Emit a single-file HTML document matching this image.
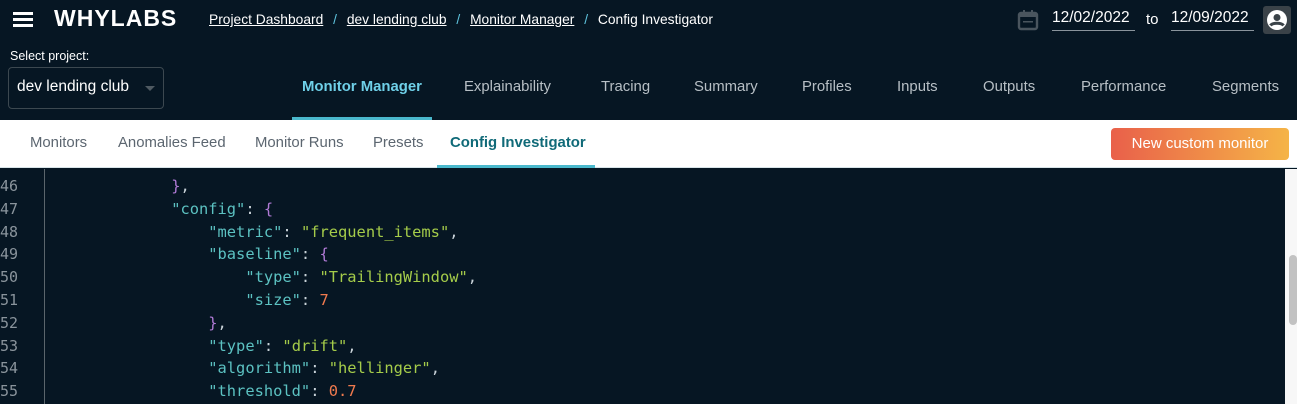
<!DOCTYPE html>
<html><head><style>
*{margin:0;padding:0;box-sizing:border-box}
body{width:1297px;height:404px;overflow:hidden;background:#061623;font-family:"Liberation Sans",sans-serif;position:relative}
.a{position:absolute;white-space:nowrap}
.top{color:#fff;font-size:13.8px}
.top u{text-decoration:underline}
.nav{color:#b7bfc5;font-size:14.9px;top:79px}
.sub{color:#5c6670;font-size:14.9px;top:135px}
.code{font-family:"DejaVu Sans Mono","Liberation Mono",monospace;font-size:15.4px;color:#5cc2c2;white-space:pre}
.ln{font-family:"DejaVu Sans Mono",monospace;font-size:15px;color:#8a949c;left:12px}
.s{color:#a5cc4a}.n{color:#f07a4e}.b{color:#b07ad6}.p{color:#c9d3d9}
</style></head><body>
<div class="a" style="left:13px;top:12px;width:20px;height:3px;background:#fff;box-shadow:0 6px 0 #fff,0 12px 0 #fff"></div>
<div class="a" style="left:54px;top:5px;color:#fff;font-size:23px;font-weight:bold;letter-spacing:1px">WHYLABS</div>
<div class="a top" style="left:209px;top:12px"><u>Project Dashboard</u> <span style="color:#5ec3dd;margin:0 6px">/</span> <u>dev lending club</u> <span style="color:#5ec3dd;margin:0 6px">/</span> <u>Monitor Manager</u> <span style="color:#5ec3dd;margin:0 6px">/</span> Config Investigator</div>
<svg class="a" style="left:1017px;top:9px" width="22" height="22" viewBox="0 0 22 22"><rect x="2" y="4" width="18" height="16" rx="2" fill="none" stroke="#4a555e" stroke-width="2.4"/><rect x="2" y="4" width="18" height="4" fill="#4a555e"/><rect x="6" y="1" width="2" height="5" fill="#4a555e"/><rect x="14" y="1" width="2" height="5" fill="#4a555e"/><rect x="6" y="12" width="10" height="1.5" fill="#4a555e"/></svg>
<div class="a" style="left:1052px;top:9px;color:#fff;font-size:15.5px;width:83px;border-bottom:1px solid #8a949c;padding-bottom:3px">12/02/2022</div>
<div class="a" style="left:1146px;top:11px;color:#fff;font-size:15px">to</div>
<div class="a" style="left:1171px;top:9px;color:#fff;font-size:15.5px;width:83px;border-bottom:1px solid #8a949c;padding-bottom:3px">12/09/2022</div>
<div class="a" style="left:1263px;top:6px;width:28px;height:28px;background:#3a4248;border-radius:3px"></div>
<svg class="a" style="left:1266px;top:9px" width="22" height="22" viewBox="0 0 22 22"><circle cx="11" cy="11" r="10" fill="#fff"/><circle cx="11" cy="8.5" r="3.5" fill="#3a4248"/><path d="M4.5 16.5c2-3 11-3 13 0" fill="none" stroke="#3a4248" stroke-width="3"/></svg>
<div class="a" style="left:10px;top:49px;color:#fff;font-size:12.5px">Select project:</div>
<div class="a" style="left:8px;top:67px;width:156px;height:42px;border:1px solid #3c4850;border-radius:4px"></div>
<div class="a" style="left:17px;top:78px;color:#fff;font-size:15.5px">dev lending club</div>
<div class="a" style="left:145px;top:86px;border-left:5px solid transparent;border-right:5px solid transparent;border-top:5px solid #4f5a62"></div>
<div class="a nav" style="left:302px;color:#6fd0e8;font-weight:bold">Monitor Manager</div>
<div class="a" style="left:292px;top:117px;width:140px;height:3px;background:#4ab8cc"></div>
<div class="a nav" style="left:464px">Explainability</div>
<div class="a nav" style="left:601px">Tracing</div>
<div class="a nav" style="left:694px">Summary</div>
<div class="a nav" style="left:802px">Profiles</div>
<div class="a nav" style="left:897px">Inputs</div>
<div class="a nav" style="left:983px">Outputs</div>
<div class="a nav" style="left:1081px">Performance</div>
<div class="a nav" style="left:1212px">Segments</div>
<div class="a" style="left:0;top:120px;width:1297px;height:48px;background:#fff;border-bottom:1px solid #d8e4e8"></div>
<div class="a sub" style="left:30px">Monitors</div>
<div class="a sub" style="left:118px">Anomalies Feed</div>
<div class="a sub" style="left:255px">Monitor Runs</div>
<div class="a sub" style="left:373px">Presets</div>
<div class="a sub" style="left:450px;color:#106a78;font-weight:bold">Config Investigator</div>
<div class="a" style="left:437px;top:165px;width:158px;height:3px;background:#4ab8cc"></div>
<div class="a" style="left:1111px;top:128px;width:178px;height:32px;border-radius:4px;background:linear-gradient(90deg,#e9604a,#f5b447);color:#fff;font-size:15px;text-align:center;line-height:32px">New custom monitor</div>
<div class="a" style="left:44px;top:169px;width:1px;height:235px;background:#5a656c"></div>
<div class="a" style="left:1285px;top:169px;width:12px;height:235px;background:#f7f7f7"></div>
<div class="a" style="left:1289px;top:255px;width:8px;height:70px;background:#c2c2c2;border-radius:4px"></div>
<div class="a" style="left:0;top:175px;line-height:22.8px">
<div class="ln">46<br>47<br>48<br>49<br>50<br>51<br>52<br>53<br>54<br>55</div>
</div>
<pre class="a code" style="left:60px;top:175px;line-height:22.8px">            <span class="b">}</span><span class="p">,</span>
            "config"<span class="p">:</span> <span class="b">{</span>
                "metric"<span class="p">:</span> <span class="s">"frequent_items"</span><span class="p">,</span>
                "baseline"<span class="p">:</span> <span class="b">{</span>
                    "type"<span class="p">:</span> <span class="s">"TrailingWindow"</span><span class="p">,</span>
                    "size"<span class="p">:</span> <span class="n">7</span>
                <span class="b">}</span><span class="p">,</span>
                "type"<span class="p">:</span> <span class="s">"drift"</span><span class="p">,</span>
                "algorithm"<span class="p">:</span> <span class="s">"hellinger"</span><span class="p">,</span>
                "threshold"<span class="p">:</span> <span class="n">0.7</span></pre>
</body></html>
